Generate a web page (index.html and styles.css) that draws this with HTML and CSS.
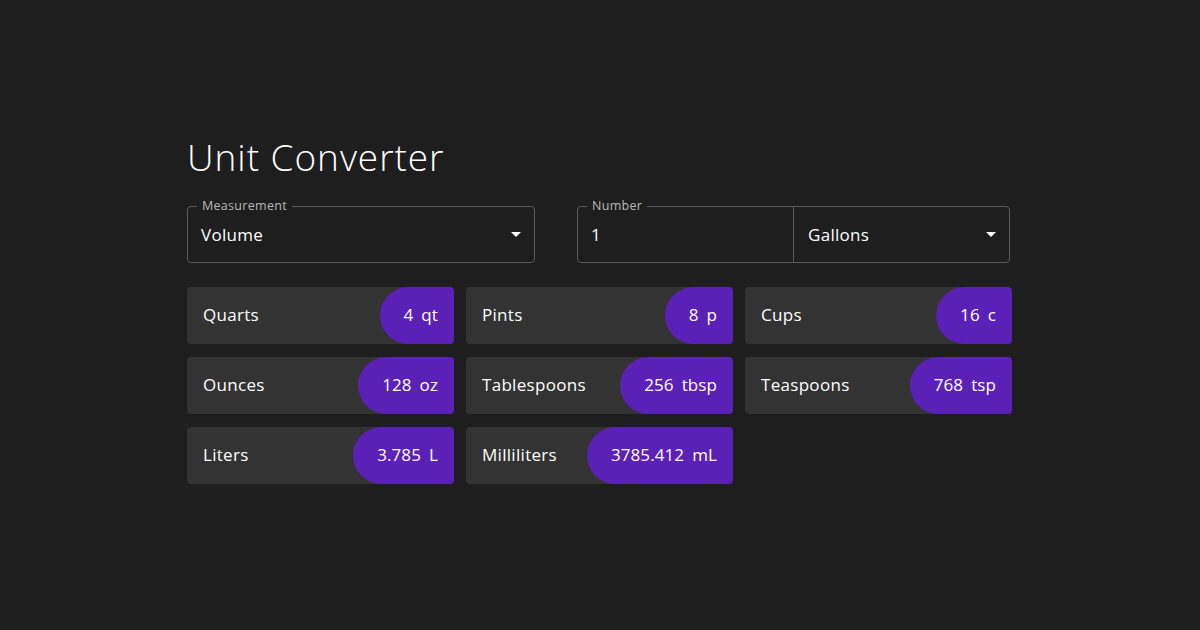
FILE: index.html
```html
<!DOCTYPE html>
<html>
<head>
<meta charset="utf-8">
<link rel="stylesheet" href="styles.css">
</head>
<body>
<main class="app">
  <h1 class="title">Unit Converter</h1>
  <div class="controls">
    <div class="field field-measure">
      <span class="label">Measurement</span>
      <div class="select">
        <span>Volume</span>
        <span class="caret"></span>
      </div>
    </div>
    <div class="field field-number">
      <span class="label">Number</span>
      <div class="input">1</div>
      <div class="select select-unit">
        <span>Gallons</span>
        <span class="caret"></span>
      </div>
    </div>
  </div>
  <div class="grid">
    <div class="card"><span class="name">Quarts</span><span class="pill"><span>4</span><span>qt</span></span></div>
    <div class="card"><span class="name">Pints</span><span class="pill"><span>8</span><span>p</span></span></div>
    <div class="card"><span class="name">Cups</span><span class="pill"><span>16</span><span>c</span></span></div>
    <div class="card"><span class="name">Ounces</span><span class="pill"><span>128</span><span>oz</span></span></div>
    <div class="card"><span class="name">Tablespoons</span><span class="pill"><span>256</span><span>tbsp</span></span></div>
    <div class="card"><span class="name">Teaspoons</span><span class="pill"><span>768</span><span>tsp</span></span></div>
    <div class="card"><span class="name">Liters</span><span class="pill"><span>3.785</span><span>L</span></span></div>
    <div class="card"><span class="name">Milliliters</span><span class="pill"><span>3785.412</span><span>mL</span></span></div>
  </div>
</main>
</body>
</html>
```

FILE: styles.css
```css
html, body {
  margin: 0;
  padding: 0;
  background: #1e1e1e;
  color: #ffffff;
  font-family: "Open Sans", "DejaVu Sans", sans-serif;
}
.app {
  width: 826px;
  margin: 0 auto;
  padding-top: 133px;
}
.title {
  margin: 0 0 26px 0;
  font-weight: 300;
  font-size: 37px;
  line-height: 47px;
  letter-spacing: 0.95px;
}
.controls {
  display: flex;
  gap: 42px;
}
.field {
  position: relative;
  display: flex;
  align-items: center;
  border: 1px solid #5a5a5a;
  border-radius: 4px;
  height: 57px;
  box-sizing: border-box;
  font-size: 17px;
  letter-spacing: 0.3px;
}
.label {
  position: absolute;
  top: -9px;
  left: 9px;
  padding: 0 5px;
  background: #1e1e1e;
  font-size: 12.5px;
  line-height: 16px;
  color: #b8b8b8;
  letter-spacing: 0.3px;
}
.field-measure { width: 348px; }
.field-number { width: 433px; }
.select {
  flex: 1;
  display: flex;
  align-items: center;
  justify-content: space-between;
  height: 100%;
  padding: 0 13px 1px 13px;
  box-sizing: border-box;
}
.caret {
  width: 0;
  height: 0;
  border-left: 5.5px solid transparent;
  border-right: 5.5px solid transparent;
  border-top: 5px solid #ffffff;
  margin-top: 1px;
}
.input {
  width: 216px;
  height: 100%;
  border-right: 1px solid #5a5a5a;
  display: flex;
  align-items: center;
  padding: 0 0 1px 13px;
  box-sizing: border-box;
}
.select-unit {
  padding-left: 14px;
}
.grid {
  margin-top: 24px;
  display: grid;
  grid-template-columns: repeat(3, 267px);
  column-gap: 12px;
  row-gap: 13px;
}
.card {
  height: 57px;
  background: #333333;
  border-radius: 4px;
  display: flex;
  align-items: center;
  justify-content: space-between;
  overflow: hidden;
  font-size: 17px;
  letter-spacing: 0.3px;
}
.name {
  padding-left: 16px;
  padding-bottom: 2px;
}
.pill {
  height: 100%;
  background: #5b21b6;
  border-radius: 29px 4px 4px 29px;
  display: flex;
  align-items: center;
  gap: 8px;
  padding: 0 16px 2px 24px;
  box-sizing: border-box;
  letter-spacing: 0.1px;
}
```
